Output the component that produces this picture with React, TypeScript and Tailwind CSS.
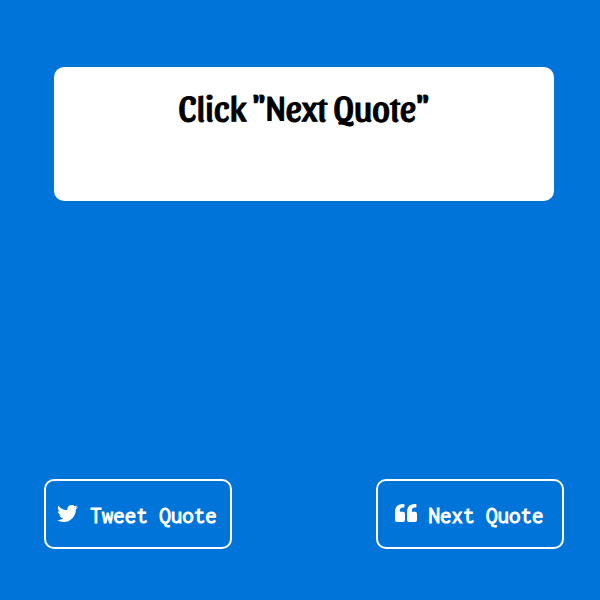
import { FaTwitter } from "react-icons/fa6";

const buttonClass =
  "flex h-[70px] w-[188px] items-center justify-center gap-3 rounded-[10px] border-2 border-white pt-0.5 pr-0.5 text-white font-['Inconsolata','DejaVu_Sans_Mono',monospace] text-[23px] leading-[24px] font-normal [-webkit-text-stroke:1px_white] cursor-pointer";

export default function App() {
  return (
    <main className="flex min-h-screen flex-col justify-between bg-[#0074d9] pt-[67px] pb-[51px]">
      <section className="mr-[46px] ml-[54px] min-h-[134px] rounded-[10px] bg-white px-4 pt-[15px] text-center text-black">
        <h1 className="font-['Sansita','Liberation_Sans_Narrow',sans-serif] text-[35px] leading-[48px] font-normal [-webkit-text-stroke:1px_black]">
          Click "Next Quote"
        </h1>
      </section>
      <div className="flex justify-between pr-[36px] pl-[44px]">
        <button type="button" className={buttonClass}>
          <FaTwitter className="mb-1 size-[21px] shrink-0" strokeWidth={0} aria-hidden="true" />
          Tweet Quote
        </button>
        <button type="button" className={buttonClass}>
          <svg viewBox="0 0 22 18" className="mb-1 h-[18px] w-[22px] shrink-0 fill-current" aria-hidden="true">
            <path d="M7.8 0H8.5Q9.5 0 9.5 1V2.6Q9.5 3.6 8.5 3.6H8Q4.8 3.6 4.8 6.7V7.8H8Q10 7.8 10 9.8V16Q10 18 8 18H2Q0 18 0 16V7.8Q0 0 7.8 0ZM19.8 0H20.5Q21.5 0 21.5 1V2.6Q21.5 3.6 20.5 3.6H20Q16.8 3.6 16.8 6.7V7.8H20Q22 7.8 22 9.8V16Q22 18 20 18H14Q12 18 12 16V7.8Q12 0 19.8 0Z" />
          </svg>
          Next Quote
        </button>
      </div>
    </main>
  );
}
